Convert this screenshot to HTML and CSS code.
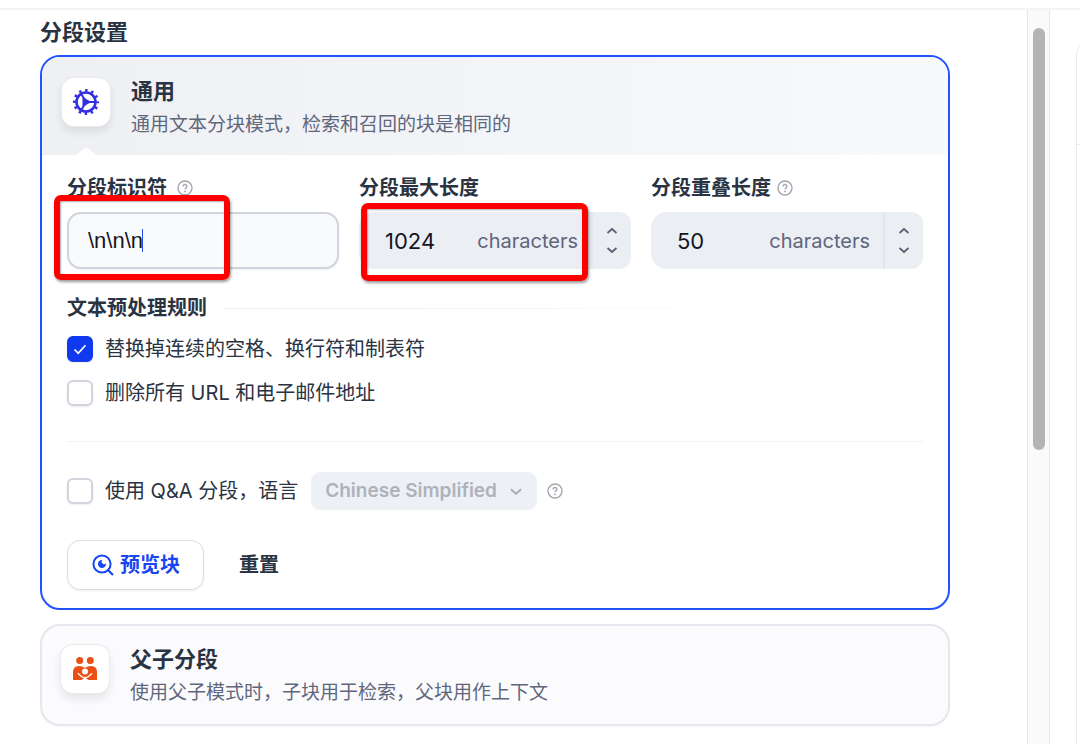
FILE: index.html
```html
<!DOCTYPE html>
<html lang="zh-CN">
<head>
<meta charset="utf-8">
<meta name="viewport" content="width=device-width, initial-scale=1">
<title>分段设置</title>
<link rel="stylesheet" href="styles.css">
</head>
<body>
<svg class="sprite" aria-hidden="true">
  <symbol id="help" viewBox="0 0 16 16"><circle cx="8" cy="8" r="7" fill="none" stroke="currentColor" stroke-width="1.4"/><path d="M6.100 6.400a1.900 1.900 0 1 1 2.800 1.700c-.6.3-.9.6-.9 1.200" fill="none" stroke="currentColor" stroke-width="1.400"/><circle cx="8" cy="11.300" r=".9" fill="currentColor"/></symbol>
  <symbol id="up" viewBox="0 0 12 8"><path d="M1.500 6 6 2l4.500 4" fill="none" stroke="currentColor" stroke-width="1.700"/></symbol>
  <symbol id="down" viewBox="0 0 12 8"><path d="M1.500 2 6 6l4.500-4" fill="none" stroke="currentColor" stroke-width="1.700"/></symbol>
</svg>
<div class="topbar"></div>
<div class="layout">
  <main class="pane">
    <h1 class="title">分段设置</h1>
    <section class="card card-active">
      <header class="card-head">
        <span class="tile tile-gear">
          <svg viewBox="0 0 28 28" width="28" height="28" aria-hidden="true">
            <g fill="none" stroke="currentColor">
              <circle cx="14" cy="14" r="9.500" stroke-width="2.600"/>
              <circle cx="14" cy="14" r="11.600" stroke-width="3" stroke-dasharray="2.400 3.674" stroke-dashoffset="1.200"/>
              <path d="M14 14h9.500M14 14 9.300 5.900M14 14l-4.700 8.100" stroke-width="2"/>
            </g>
            <path d="M17.500 14 11.500 10.500v7z" fill="currentColor" stroke="currentColor" stroke-width="2" stroke-linejoin="round"/>
          </svg>
        </span>
        <div class="card-text">
          <h2 class="card-title">通用</h2>
          <p class="card-desc">通用文本分块模式，检索和召回的块是相同的</p>
        </div>
        <svg class="notch" viewBox="0 0 20 7" aria-hidden="true"><path d="M0 7 7 1.200Q10-1 13 1.200L20 7z" fill="#fff"/></svg>
      </header>
      <div class="card-body">
        <div class="fields">
          <div class="field">
            <div class="field-label field-label-wide"><label for="sep">分段标识符</label><svg class="help"><use href="#help"/></svg></div>
            <div class="text-wrap">
              <input class="text-input" id="sep" type="text" value="\n\n\n">
              <span class="caret"></span>
            </div>
            <span class="mark mark-sep"></span>
          </div>
          <div class="field">
            <div class="field-label"><label for="max">分段最大长度</label></div>
            <div class="number">
              <input class="number-input" id="max" type="number" value="1024">
              <span class="unit">characters</span>
              <div class="steps">
                <button class="step" type="button" aria-label="+"><svg class="step-icon"><use href="#up"/></svg></button>
                <button class="step" type="button" aria-label="-"><svg class="step-icon"><use href="#down"/></svg></button>
              </div>
            </div>
            <span class="mark mark-max"></span>
          </div>
          <div class="field">
            <div class="field-label"><label for="overlap">分段重叠长度</label><svg class="help"><use href="#help"/></svg></div>
            <div class="number">
              <input class="number-input" id="overlap" type="number" value="50">
              <span class="unit">characters</span>
              <div class="steps">
                <button class="step" type="button" aria-label="+"><svg class="step-icon"><use href="#up"/></svg></button>
                <button class="step" type="button" aria-label="-"><svg class="step-icon"><use href="#down"/></svg></button>
              </div>
            </div>
          </div>
        </div>
        <h3 class="rules-title">文本预处理规则<span class="fade-line"></span></h3>
        <div class="rules">
          <div class="check-row">
            <span class="check"><input class="box" id="r1" type="checkbox" checked><svg class="tick" viewBox="0 0 16 16"><path d="m2.500 8.500 3.700 3.700 7.300-8" fill="none" stroke="#fff" stroke-width="1.700"/></svg></span>
            <label for="r1">替换掉连续的空格、换行符和制表符</label>
          </div>
          <div class="check-row">
            <span class="check"><input class="box" id="r2" type="checkbox"></span>
            <label for="r2">删除所有 URL 和电子邮件地址</label>
          </div>
        </div>
        <hr class="divider">
        <div class="check-row">
          <span class="check"><input class="box" id="qa" type="checkbox"></span>
          <label for="qa">使用 Q&amp;A 分段，语言</label>
          <span class="select-wrap">
            <select class="select" aria-label="语言" disabled><option>Chinese Simplified</option></select>
            <svg class="select-icon"><use href="#down"/></svg>
          </span>
          <svg class="help"><use href="#help"/></svg>
        </div>
        <div class="actions">
          <button class="btn btn-preview" type="button">
            <svg viewBox="0 0 22 22" width="22" height="22" aria-hidden="true"><circle cx="10" cy="10" r="8.600" fill="none" stroke="currentColor" stroke-width="2"/><path d="m16 16 5 5" stroke="currentColor" stroke-width="2.200"/><path d="M10.200 6a2.200 2.200 0 0 0 3.700 3.300A4 4 0 1 1 10.200 6z" fill="currentColor"/></svg>
            预览块
          </button>
          <button class="btn btn-reset" type="button">重置</button>
        </div>
      </div>
    </section>
    <section class="card card-plain">
      <header class="card-head">
        <span class="tile tile-family">
          <svg viewBox="0 0 26 26" width="26" height="26" aria-hidden="true">
            <g fill="currentColor"><circle cx="7.700" cy="4.600" r="3.500"/><circle cx="18.300" cy="4.600" r="3.500"/>
            <path d="M1 24V16Q1 10 7 10q3.500 0 6 2 2.500-2 6-2 6 0 6 6V24H16.500L13 21.500 9.500 24z"/></g>
            <circle cx="13" cy="15.400" r="3" fill="#fff"/>
            <path d="m5.800 17.300 4 3.400q3.200 1.800 6.400 0l4-3.400" fill="none" stroke="#fff" stroke-width="1.300"/>
          </svg>
        </span>
        <div class="card-text">
          <h2 class="card-title">父子分段</h2>
          <p class="card-desc">使用父子模式时，子块用于检索，父块用作上下文</p>
        </div>
      </header>
    </section>
  </main>
  <div class="scrollbar"><div class="thumb"></div></div>
  <aside class="side"><div class="side-card"></div></aside>
</div>
</body>
</html>
```
FILE: styles.css
```css
* { box-sizing: border-box; }
body {
  margin: 0;
  height: 100vh;
  display: flex;
  flex-direction: column;
  overflow: hidden;
  background: #fff;
  color: #2a3342;
  font: 20px/28px Inter, "Noto Sans CJK SC", sans-serif;
}
h1, h2, h3, p { margin: 0; }
input, button, select { font: inherit; color: inherit; margin: 0; }
.sprite { display: none; }
.topbar { flex: none; height: 10px; border-bottom: 2px solid #f4f4f5; }
.layout { flex: 1; min-height: 0; display: flex; }
.pane { flex: 1; min-width: 0; padding: 8px 77px 0 40px; }
.title { font-size: 22px; margin-bottom: 9px; }
.title, .card-title, .rules-title, .field-label, .btn { font-weight: 600; }

.card { border-radius: 20px; overflow: hidden; }
.card-active { border: 2px solid #2253ff; }
.card-head { position: relative; display: flex; gap: 21px; padding: 21px 20px 16px; }
.card-active .card-head { background: linear-gradient(90deg, #eff0f4, #f8f9fb); }
.tile {
  flex: none;
  width: 48px;
  height: 48px;
  display: grid;
  place-items: center;
  border-radius: 12px;
  background: #fff;
  box-shadow: 0 0 0 1px #e9eaee, 0 5px 10px #1018281c;
}
.tile-gear { color: #3430e0; }
.tile-family { color: #ea4f16; }
.card-text { display: grid; gap: 5px; }
.card-title { font-size: 22px; line-height: 27px; }
.card-desc { font-size: 19px; line-height: 29px; color: #5f677d; }
.notch { position: absolute; left: 34px; bottom: 0; width: 20px; height: 7px; }
.card-body { padding: 19px 25px 18px; }

.fields { display: grid; grid-template-columns: repeat(3, 1fr); gap: 20px; }
.field { position: relative; display: grid; gap: 10px; min-width: 0; }
.field-label { display: flex; align-items: center; gap: 6px; }
.field-label-wide { gap: 10px; }
.help { flex: none; width: 16px; height: 16px; color: #a3a6af; }
.text-wrap { position: relative; display: grid; }
.text-input {
  width: 100%;
  height: 57px;
  padding: 0 19px;
  border: 2px solid #d0d4de;
  border-radius: 14px;
  outline: 0;
  background: #f9fafb;
  color: #14161f;
  font-family: "Liberation Sans", sans-serif;
  font-size: 22px;
  box-shadow: 0 1px 2px #10182812;
}
.caret { position: absolute; left: 75px; top: 17px; width: 1px; height: 23px; background: #1f4cf0; }
.number { display: flex; align-items: center; height: 57px; border-radius: 16px 12px 12px 16px; overflow: hidden; background: #ebeef2; }
.number-input {
  flex: 1;
  min-width: 0;
  padding: 0 0 0 26px;
  border: 0;
  outline: 0;
  background: none;
  color: #14161f;
  font-size: 22px;
  appearance: textfield;
}
.number-input::-webkit-inner-spin-button { appearance: none; margin: 0; }
.unit { padding-right: 13px; color: #5f657c; }
.steps { width: 40px; height: 100%; display: flex; flex-direction: column; justify-content: center; border-left: 2px solid #e3e6ea; }
.step { display: grid; place-items: center; height: 19px; padding: 0; border: 0; background: none; color: #596074; }
.step-icon { width: 12px; height: 8px; }

.mark { position: absolute; z-index: 1; border: 6px solid #fe0000; border-radius: 7px; box-shadow: 1px 2px 3px #0006, inset 1px 1px 2px #0005; }
.mark-sep { left: -13px; top: 21px; width: 176px; height: 85px; }
.mark-max { left: 2px; top: 29px; width: 227px; height: 78px; }

.rules-title { display: flex; align-items: center; gap: 16px; margin: 25px 0 13px; font-size: 20px; }
.fade-line { flex: 1; height: 1px; background: linear-gradient(90deg, #e9ebef, #e9ebef00 80%); }
.rules { display: grid; gap: 16px; }
.check-row { display: flex; align-items: center; }
.check { display: grid; flex: none; margin-right: 12px; }
.box { grid-area: 1 / 1; appearance: none; width: 26px; height: 26px; border: 2px solid #d0d4de; border-radius: 6px; background: #fff; box-shadow: 0 1px 2px #10182814; }
.box:checked { border-color: #103af0; background: #103af0; }
.tick { grid-area: 1 / 1; place-self: center; width: 16px; height: 16px; pointer-events: none; }
.divider { height: 1px; margin: 34px 0 30px; border: 0; background: #f2f3f5; }
.select-wrap { position: relative; margin: 0 10px 0 13px; }
.select { display: block; appearance: none; width: 226px; height: 38px; padding: 0 14px; border: 0; border-radius: 9px; background: #edf0f5; color: #afb2ba; font-size: 19px; font-weight: 600; opacity: 1; }
.select-icon { position: absolute; right: 14px; top: 15px; width: 14px; height: 9px; color: #a8abb4; }
.actions { display: flex; gap: 12px; margin-top: 30px; }
.btn { height: 50px; border: 1px solid transparent; border-radius: 13px; background: none; }
.btn-preview { display: flex; align-items: center; gap: 6px; padding: 0 23px 0 24px; border-color: #dcdde0; background: #fff; color: #1746f2; box-shadow: 0 1px 2px #10182812; }
.btn-reset { padding: 0 22px; }

.card-plain { margin-top: 14px; border: 2px solid #e6e6ef; background: #fbfbfd; box-shadow: 0 1px 2px #1018280a; }
.card-plain .card-head { padding: 19px 20px 17px 19px; }
.card-plain .card-text { padding-top: 1px; }

.scrollbar { flex: none; width: 23px; padding: 18px 4px 0 5px; border: 1px solid #e9e9e9; border-width: 0 1px; background: #fafafa; }
.thumb { height: 59%; border-radius: 7px; background: #b4b4b4; }
.side { flex: none; width: 30px; padding: 30px 0 0 26px; overflow: hidden; }
.side-card { width: 60px; height: 100vh; border: 1px solid #ececee; border-radius: 14px; background: linear-gradient(#ececee, #ececee) 0 103px / 100% 1px no-repeat; }
```
